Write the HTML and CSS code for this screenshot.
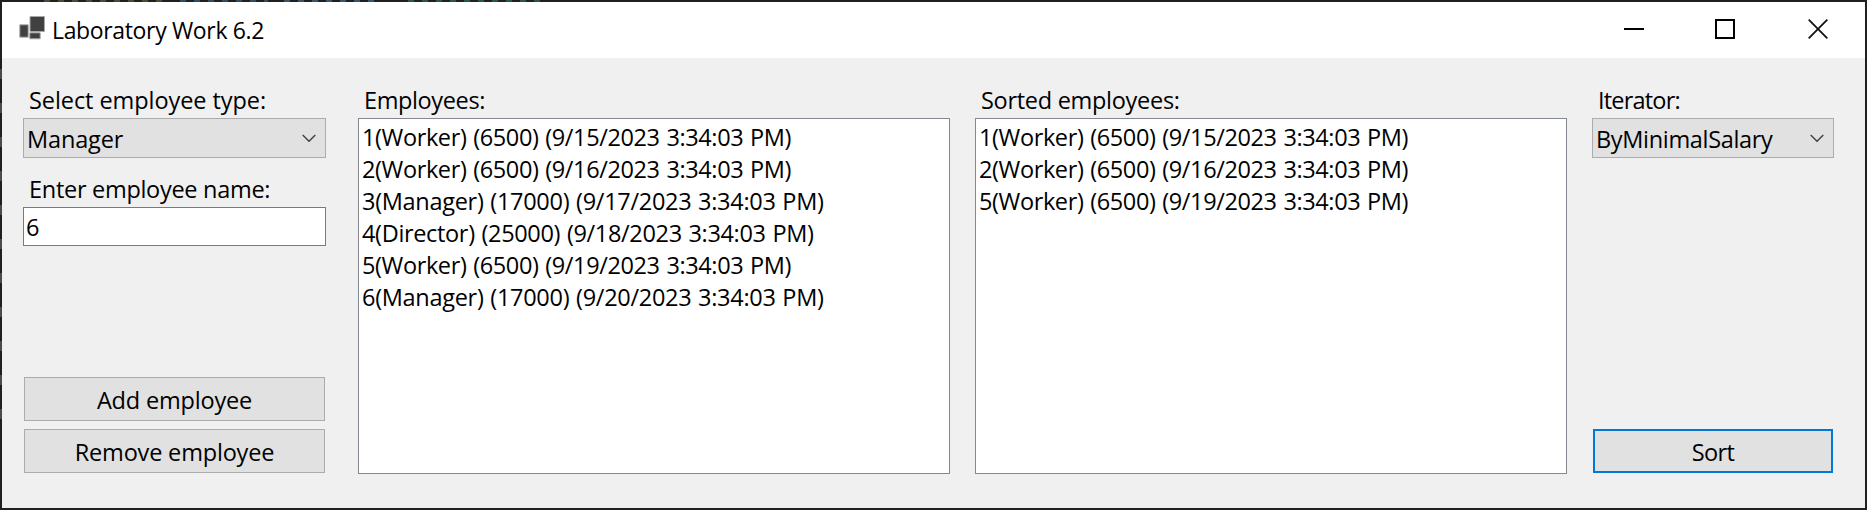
FILE: index.html
```
<!DOCTYPE html>
<html lang="en">
<head>
<meta charset="utf-8">
<title>Laboratory Work 6.2</title>
<link rel="stylesheet" href="styles.css">
</head>
<body>
<div class="window">
  <header class="titlebar">
    <svg class="app-icon" width="28" height="26" viewBox="0 0 28 26"><g fill="#404040" stroke="#a8a8a8" stroke-width="1"><path d="M11 .5h14.500v15H11z"/><path d="M.8 8.800h8.400v12.400H.8z"/><path d="M10.800 16.800h10.400v6H10.800z"/></g></svg>
    <h1 class="title">Laboratory Work 6.2</h1>
    <div class="controls">
      <svg width="20" height="20" viewBox="0 0 20 20"><path d="M0 10h20" stroke="#000" stroke-width="2"/></svg>
      <svg width="20" height="20" viewBox="0 0 20 20"><path d="M1 1h18v18H1z" fill="none" stroke="#000" stroke-width="2"/></svg>
      <svg class="close" width="20" height="20" viewBox="0 0 20 20"><path d="M.7 .7l18.600 18.600M19.300 .7L.7 19.300" stroke="#111" stroke-width="1.800"/></svg>
    </div>
  </header>
  <main class="form">
    <section class="column">
      <label class="label t-type">Select employee type:</label>
      <div class="combo"><span class="t-manager">Manager</span><svg class="chevron" width="14" height="9" viewBox="0 0 14 9"><path d="M.7 1L7 7.300 13.300 1" fill="none" stroke="#404040" stroke-width="1.400"/></svg></div>
      <label class="label label-name t-name">Enter employee name:</label>
      <div class="textbox">6</div>
      <div class="buttons">
        <button class="button">Add employee</button>
        <button class="button">Remove employee</button>
      </div>
    </section>
    <section class="column">
      <label class="label t-employees">Employees:</label>
      <ul class="list">
        <li>1(Worker) (6500) (9/15/2023 3:34:03 PM)</li>
        <li>2(Worker) (6500) (9/16/2023 3:34:03 PM)</li>
        <li class="t-manager-row">3(Manager) (17000) (9/17/2023 3:34:03 PM)</li>
        <li class="t-director-row">4(Director) (25000) (9/18/2023 3:34:03 PM)</li>
        <li>5(Worker) (6500) (9/19/2023 3:34:03 PM)</li>
        <li class="t-manager-row">6(Manager) (17000) (9/20/2023 3:34:03 PM)</li>
      </ul>
    </section>
    <section class="column">
      <label class="label t-sorted">Sorted employees:</label>
      <ul class="list">
        <li>1(Worker) (6500) (9/15/2023 3:34:03 PM)</li>
        <li>2(Worker) (6500) (9/16/2023 3:34:03 PM)</li>
        <li>5(Worker) (6500) (9/19/2023 3:34:03 PM)</li>
      </ul>
    </section>
    <section class="column">
      <label class="label t-iterator">Iterator:</label>
      <div class="combo"><span class="t-salary">ByMinimalSalary</span><svg class="chevron" width="14" height="9" viewBox="0 0 14 9"><path d="M.7 1L7 7.300 13.300 1" fill="none" stroke="#404040" stroke-width="1.400"/></svg></div>
      <div class="buttons">
        <button class="button button-default">Sort</button>
      </div>
    </section>
  </main>
</div>
</body>
</html>
```
FILE: styles.css
```
* { box-sizing: border-box; }
body {
  margin: 0;
  padding: 2px;
  width: 1867px;
  height: 510px;
  background:
    repeating-linear-gradient(#4a4a4a 0 10px, transparent 10px 34px) 0 69px / 2px 350px no-repeat,
    repeating-linear-gradient(90deg, #2f4d66 0 6px, transparent 6px 14px) 180px 0 / 88px 2px no-repeat,
    repeating-linear-gradient(90deg, #4d4a38 0 6px, transparent 6px 14px) 44px 0 / 126px 2px no-repeat,
    repeating-linear-gradient(90deg, #3d5366 0 6px, transparent 6px 14px) 284px 0 / 92px 2px no-repeat,
    repeating-linear-gradient(90deg, #28584c 0 6px, transparent 6px 14px) 408px 0 / 136px 2px no-repeat,
    #202020;
  color: #000;
  font: 23.5px/32px "Open Sans", "Noto Sans", sans-serif;
}
.window { height: 506px; background: #f0f0f0; }
.titlebar {
  display: flex;
  align-items: flex-start;
  height: 56px;
  padding: 14px 37px 0 17px;
  background: #fff;
}
.app-icon { flex: none; }
.title {
  margin: -2px 0 0 5px;
  font: inherit;
  font-size: 23px;
  letter-spacing: -0.35px;
  white-space: nowrap;
}
.controls { display: flex; gap: 71px; margin: 3px 0 0 auto; }
.close { margin-left: 2px; }
.form {
  display: grid;
  grid-template-columns: 303px 592px 592px 242px;
  column-gap: 25px;
  height: 416px;
  padding: 26px 0 0 21px;
}
.column { display: flex; flex-direction: column; height: 390px; white-space: nowrap; }
.column:nth-child(n + 2) { position: relative; left: 7px; }
.label { height: 34px; padding-left: 6px; }
.combo {
  display: flex;
  justify-content: space-between;
  height: 40px;
  padding: 4px 9px 0 3px;
  border: 1px solid #acacac;
  background: #e1e1e1;
}
.chevron { margin-top: 11px; }
.label-name { margin-top: 15px; }
.textbox { height: 39px; padding: 3px 2px; border: 1px solid #7a7a7a; background: #fff; }
.buttons { display: flex; flex-direction: column; gap: 8px; margin: auto 1px 1px; }
.button {
  height: 44px;
  padding: 2px 0 0;
  border: 1px solid #acacac;
  background: #e1e1e1;
  color: inherit;
  font: inherit;
  letter-spacing: -0.18px;
}
.button-default { border: 2px solid #0078d7; letter-spacing: -0.6px; }
.list {
  flex: 1;
  margin: 0;
  padding: 2px 3px;
  border: 1px solid #828790;
  background: #fff;
  letter-spacing: -0.38px;
  word-spacing: 1px;
  list-style: none;
}
.t-manager-row { letter-spacing: -0.3px; }
.t-director-row { letter-spacing: -0.34px; }
.t-type { letter-spacing: -0.07px; }
.t-manager { letter-spacing: -0.15px; }
.t-name { letter-spacing: -0.29px; }
.t-employees { letter-spacing: -0.38px; }
.t-sorted { letter-spacing: -0.29px; }
.t-iterator { letter-spacing: -0.8px; }
.t-salary { letter-spacing: -0.33px; }
```
